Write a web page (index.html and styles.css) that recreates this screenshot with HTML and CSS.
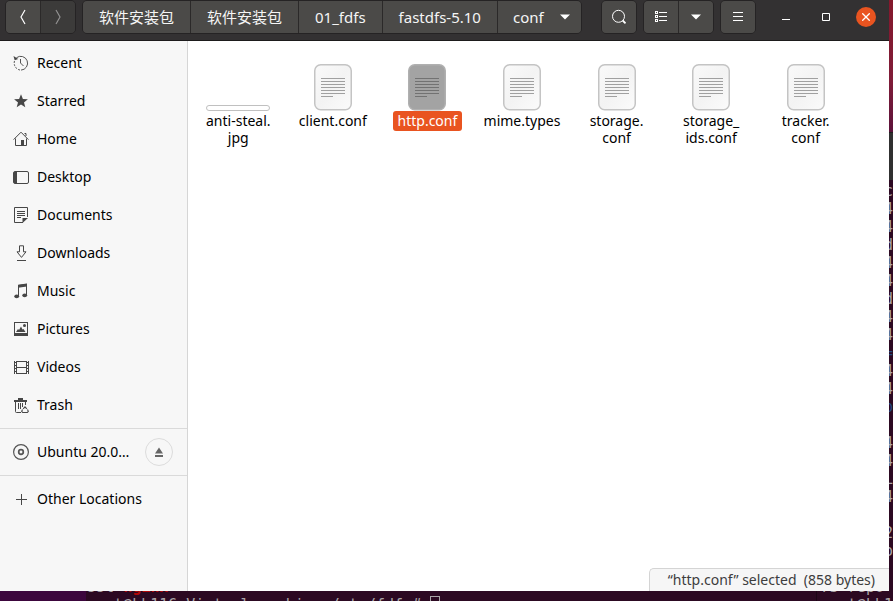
FILE: index.html
```html
<!DOCTYPE html>
<html lang="en">
<head>
<meta charset="utf-8">
<title>conf</title>
<link rel="stylesheet" href="styles.css">
</head>
<body>
<svg class="defs" aria-hidden="true">
  <defs>
    <linearGradient id="paper" x1="0" y1="0" x2="1" y2="1"><stop offset="0" stop-color="#fafafa"/><stop offset="0.5" stop-color="#f3f3f3"/><stop offset="1" stop-color="#fbfbfb"/></linearGradient>
    <symbol id="doc" viewBox="0 0 38 47">
      <rect class="sheet" x="0.75" y="0.75" width="36.5" height="45" rx="6"/>
      <path class="lines" d="M7 14.5h24M7 17.5h24M7 20.5h24M7 23.5h24M7 26.5h24M7 29.5h24M7 32.5h12"/>
    </symbol>
  </defs>
</svg>
<div class="window">
  <header class="bar">
    <div class="group nav">
      <button aria-label="Back"><svg width="16" height="16" viewBox="0 0 16 16"><path d="M10 1L6 8l4 7" fill="none" stroke="#fff" stroke-width="1.2"/></svg></button>
      <button class="off" aria-label="Forward"><svg width="16" height="16" viewBox="0 0 16 16"><path d="M6 1l4 7-4 7" fill="none" stroke="#919090" stroke-width="1.2"/></svg></button>
    </div>
    <nav class="group path">
      <button>软件安装包</button>
      <button>软件安装包</button>
      <button>01_fdfs</button>
      <button>fastdfs-5.10</button>
      <button class="current">conf<svg width="10" height="6" viewBox="0 0 10 6"><path d="M0 0.5h10L5 5.5z" fill="#fff"/></svg></button>
    </nav>
    <div class="tools">
      <div class="group"><button aria-label="Search"><svg width="16" height="16" viewBox="0 0 16 16" fill="none" stroke="#fff"><circle cx="7.5" cy="7.3" r="6"/><path d="M11.7 11.5l2.8 2.8" stroke-width="1.8"/></svg></button></div>
      <div class="group">
        <button aria-label="List view"><svg width="14" height="12" viewBox="0 0 14 12" fill="none" stroke="#fff" shape-rendering="crispEdges"><path d="M1.5.5h2v2h-2zM1.5 4.5h2v2h-2zM1.5 8.5h2v2h-2zM5 1.5h8M5 5.5h8M5 9.5h8"/></svg></button>
        <button aria-label="View options"><svg width="10" height="6" viewBox="0 0 10 6"><path d="M0 0.5h10L5 5.5z" fill="#fff"/></svg></button>
      </div>
      <div class="group"><button aria-label="Menu"><svg width="10" height="10" viewBox="0 0 10 10" stroke="#fff" shape-rendering="crispEdges"><path d="M0 .5h10M0 4.5h10M0 8.5h10"/></svg></button></div>
    </div>
    <div class="controls">
      <button aria-label="Minimize"><svg width="8" height="8" viewBox="0 0 8 8"><path d="M0 6h8v1H0z" fill="#fff"/></svg></button>
      <button aria-label="Maximize"><svg width="8" height="8" viewBox="0 0 8 8"><path d="M.5.5h7v7h-7z" fill="none" stroke="#fff"/></svg></button>
      <button class="close" aria-label="Close"><svg width="8" height="8" viewBox="0 0 8 8"><path d="M.3.3l7.4 7.4M7.7.3L.3 7.7" stroke="#fff" stroke-width="1.3"/></svg></button>
    </div>
  </header>
  <div class="content">
    <aside class="side">
      <ul>
        <li><a href="#"><svg viewBox="0 0 16 16"><path d="M3.4 2.8A6.9 6.9 0 1 1 8 15.1" fill="none" stroke="#555"/><path d="M1.5 6a7 7 0 0 0 5.5 9" fill="none" stroke="#555" stroke-dasharray="2 1.3"/><path d="M.5 1l1.2 4.2L5.2 4z" fill="#444"/><path d="M7.5 4v4l3 3" fill="none" stroke="#555"/></svg>Recent</a></li>
        <li><a href="#"><svg viewBox="0 0 16 16"><path d="M8 1.2l1.9 4.7 5 .3-3.9 3.2 1.3 4.9L8 11.6l-4.3 2.7L5 9.4 1.1 6.2l5-.3z" fill="#474747"/></svg>Starred</a></li>
        <li><a href="#"><svg viewBox="0 0 16 16" fill="none" stroke="#474747"><path d="M.6 8.6L8 1.2l7.4 7.4M2.5 7.5v7h11v-7M13 5V2.5h-1.5"/><path d="M8 9h3v5H8z" fill="#474747" stroke="none"/></svg>Home</a></li>
        <li><a href="#"><svg viewBox="0 0 16 16"><rect x=".5" y="2.5" width="15" height="12" rx="1.5" fill="none" stroke="#474747"/><path d="M1 3h3v11H1z" fill="#474747"/></svg>Desktop</a></li>
        <li><a href="#"><svg viewBox="0 0 16 16"><path d="M14.5 10V.5h-13v15H10M4 4.5h8M4 6.5h8M4 8.5h8M4 10.5h4" fill="none" stroke="#474747"/><path d="M9.5 16v-5H15z" fill="#474747"/></svg>Documents</a></li>
        <li><a href="#"><svg viewBox="0 0 16 16" fill="none" stroke="#474747"><path d="M6.5.8h4v6H13l-4.5 5.6L4 6.8h2.5zM4 15.5h9"/></svg>Downloads</a></li>
        <li><a href="#"><svg viewBox="0 0 16 16"><path d="M5.5 13V2.5l8-1.2V12" fill="none" stroke="#474747"/><path d="M5 1.8L14 .6v3L5 4.8z" fill="#474747"/><ellipse cx="3.7" cy="13.3" rx="2.4" ry="1.9" fill="#474747"/><ellipse cx="11.7" cy="12.3" rx="2.4" ry="1.9" fill="#474747"/></svg>Music</a></li>
        <li><a href="#"><svg viewBox="0 0 16 16"><path d="M1 1h14v14H1zM2 2v10h12V2z" fill="#474747" fill-rule="evenodd"/><path d="M3 11l2-3 1 1 2-3.5 1.5 3L10.5 8l2 3z" fill="#474747"/><circle cx="11.5" cy="4.5" r="1.5" fill="#474747"/></svg>Pictures</a></li>
        <li><a href="#"><svg viewBox="0 0 16 16" fill="none" stroke="#474747"><path d="M1.5 2v13M3.5 2v13M13.5 2v13M15.5 2v13M3.5 2.5h10M3.5 8.5h10M3.5 14.5h10"/><path d="M1 3.5h3M1 6.5h3M1 9.5h3M1 12.5h3M13 3.5h3M13 6.5h3M13 9.5h3M13 12.5h3"/></svg>Videos</a></li>
        <li><a href="#"><svg viewBox="0 0 16 16" fill="none" stroke="#474747"><path d="M1 3h13v2H1zM5 3V1h5v2" fill="#474747" stroke="none"/><path d="M2.5 5v9.500q0 1 1 1H8M12.5 5v3M5.5 6v6M7.5 6v6M9.5 6v4"/><path d="M10.200 11.800l1.800-2 1.800 2M14.500 12.500l.8 1.800-1 1.200h-4.600l-1-1.200.8-1.800" stroke-width="1.1"/></svg>Trash</a></li>
      </ul>
      <ul>
        <li><a href="#"><svg viewBox="0 0 16 16" fill="none" stroke="#555"><circle cx="8" cy="8" r="7.4" stroke-width="1.2"/><circle cx="8" cy="8" r="2.3" stroke-width="1.7"/></svg><span>Ubuntu 20.0…</span></a><button class="eject" aria-label="Eject"><svg width="8" height="10" viewBox="0 0 8 10"><path d="M0 6.5L4 .5l4 6zM0 8h8v2H0z" fill="#666"/></svg></button></li>
      </ul>
      <ul>
        <li><a href="#"><svg viewBox="0 0 16 16"><path d="M3 8.5h11M8.5 3v11" fill="none" stroke="#474747"/></svg>Other Locations</a></li>
      </ul>
    </aside>
    <main class="files">
      <figure><div class="thumb"><div class="wide"></div></div><figcaption>anti-steal.<br>jpg</figcaption></figure>
      <figure><div class="thumb"><svg><use href="#doc"/></svg></div><figcaption>client.conf</figcaption></figure>
      <figure class="selected"><div class="thumb"><svg><use href="#doc"/></svg></div><figcaption>http.conf</figcaption></figure>
      <figure><div class="thumb"><svg><use href="#doc"/></svg></div><figcaption>mime.types</figcaption></figure>
      <figure><div class="thumb"><svg><use href="#doc"/></svg></div><figcaption>storage.<br>conf</figcaption></figure>
      <figure><div class="thumb"><svg><use href="#doc"/></svg></div><figcaption>storage_<br>ids.conf</figcaption></figure>
      <figure><div class="thumb"><svg><use href="#doc"/></svg></div><figcaption>tracker.<br>conf</figcaption></figure>
      <div class="status">“http.conf” selected&nbsp; (858 bytes)</div>
    </main>
  </div>
</div>
<div class="right-edge">
  <div class="wall"></div>
  <div class="titlebar"></div>
  <pre>c
4
4
d
4
4
d
4
4
<i>=</i>
4
4
<i>p</i>

4
4
L
4

2
o</pre>
</div>
<div class="bottom-edge">
  <div class="purple"></div>
  <pre class="term">ssl <b>nginx</b>
root@hh116-Virtual-machine:/etc/fdfs# <span class="cursor"></span></pre>
  <pre class="term second">73 repo
root@hh1</pre>
</div>
</body>
</html>
```
FILE: styles.css
```css
* { box-sizing: border-box; }
body {
  margin: 0;
  height: 100vh;
  display: grid;
  grid-template: minmax(0, 1fr) 10px / minmax(0, 1fr) 4px;
  overflow: hidden;
  background: #2c0922;
  font-family: "Noto Sans", "Noto Sans CJK SC", sans-serif;
  font-size: 14px;
  color: #000;
}
button { font: inherit; color: inherit; padding: 0; border: 0; background: none; }
svg { flex: none; }
.defs { position: absolute; width: 0; height: 0; }
.window { display: flex; flex-direction: column; min-height: 0; }

.bar {
  display: flex;
  align-items: flex-start;
  height: 41px;
  padding-left: 5px;
  background: #333132;
  border-bottom: 1px solid #1d1b1c;
  color: #f5f5f5;
}
.group { display: flex; height: 34px; border: 1px solid #252324; border-radius: 5px; overflow: hidden; }
.group button {
  display: flex;
  align-items: center;
  justify-content: center;
  min-width: 34px;
  background: #4b4a48;
}
.group button + button { border-left: 1px solid #2b2929; min-width: 35px; }
.group .off { background: #3c3b3a; }
.path { margin-left: 6px; }
.path button { padding: 0 16px; white-space: nowrap; font-size: 15px; line-height: 20px; }
.path .current { padding: 0 11px 0 15px; gap: 16px; }
.tools { display: flex; gap: 6px; margin-left: auto; }
.controls { display: flex; align-items: center; height: 34px; gap: 20px; margin: 0 13px 0 20px; }
.controls button { display: flex; align-items: center; justify-content: center; width: 20px; height: 20px; border-radius: 50%; }
.controls .close { background: #e95420; }

.content { flex: 1; display: flex; min-height: 0; }
.side { width: 188px; padding-top: 3px; background: #f7f7f7; border-right: 1px solid #d6d6d6; }
.side ul { list-style: none; margin: 0; padding: 0 0 4px; }
.side ul + ul { border-top: 1px solid #dadada; padding-top: 4px; }
.side li { display: flex; align-items: center; height: 38px; padding: 0 14px 0 13px; }
.side a { flex: 1; display: flex; align-items: center; gap: 8px; line-height: 18px; color: inherit; text-decoration: none; white-space: nowrap; }
.side a svg { width: 16px; height: 16px; }
.eject {
  display: flex;
  align-items: center;
  justify-content: center;
  width: 28px;
  height: 28px;
  border: 1px solid #dcdcdc;
  border-radius: 50%;
}

.files {
  position: relative;
  flex: 1;
  display: grid;
  grid-template-columns: repeat(7, minmax(0, 1fr));
  align-content: start;
  padding: 23px 36px 0 3px;
  background: #fff;
}
figure {
  --sheet: url(#paper);
  --edge: #c4c4c4;
  --ink: #a0a0a0;
  display: flex;
  flex-direction: column;
  align-items: center;
  margin: 0;
}
.selected { --sheet: #a3a3a3; --edge: #b0b0b0; --ink: #727272; }
.thumb { display: flex; align-items: flex-end; height: 47px; }
.thumb svg { width: 38px; height: 47px; }
.wide { width: 64px; height: 6px; border: 1px solid #c0c0c0; border-radius: 3px; }
.sheet { fill: var(--sheet); stroke: var(--edge); stroke-width: 1.5; }
.lines { stroke: var(--ink); }
figcaption { padding: 1px 5px 2px; line-height: 17px; text-align: center; white-space: nowrap; border-radius: 3px; }
.selected figcaption { background: #e95420; color: #fff; }
.status {
  position: absolute;
  right: 0;
  bottom: 0;
  padding: 0 14px 0 18px;
  line-height: 22px;
  color: #3d3d3d;
  background: #f6f6f6;
  border: 1px solid #d4d4d4;
  border-width: 1px 0 0 1px;
  border-radius: 5px 0 0 0;
}

pre { margin: 0; font: 15px/18px "DejaVu Sans Mono", monospace; color: #aaa4a8; }
.right-edge { overflow: hidden; display: flex; flex-direction: column; align-items: flex-end; }
.right-edge .wall { width: 100%; flex: 0 0 132px; background: linear-gradient(#84182c, #801c38 60%, #5c123a); }
.right-edge .titlebar { width: 100%; flex: 0 0 48px; background: #303030; border-top: 1px solid #202020; }
.right-edge pre { padding-top: 2px; }
.right-edge i { font-style: normal; color: #234b80; }
.bottom-edge { grid-column: 1 / -1; display: flex; overflow: hidden; }
.purple { flex: 0 0 86px; background: #3c063d; }
.term { flex: 1; padding-left: 1px; margin-top: -13px; }
.term b { font-weight: 700; color: #b00808; }
.cursor { display: inline-block; width: 10px; height: 16px; border: 1px solid #aaa4a8; vertical-align: top; }
.second { flex: 0 0 74px; padding-left: 4px; border-left: 1px solid #1c0616; }
```
